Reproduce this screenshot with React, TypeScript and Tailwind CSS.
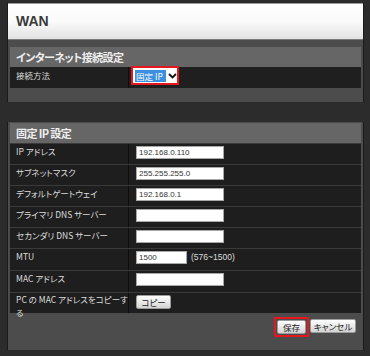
import React from "react";

const jp = "font-['Noto_Sans_CJK_JP',sans-serif] [font-feature-settings:'palt']";

interface Row {
  label: React.ReactNode;
  value?: string;
  kind: "input" | "mtu" | "copy";
  h: string;
  small?: boolean;
}

const rows: Row[] = [
  { label: "IP アドレス", value: "192.168.0.110", kind: "input", h: "h-[21px]" },
  { label: "サブネットマスク", value: "255.255.255.0", kind: "input", h: "h-[21px]" },
  { label: "デフォルトゲートウェイ", value: "192.168.0.1", kind: "input", h: "h-[21px]" },
  { label: "プライマリ DNS サーバー", value: "", kind: "input", h: "h-[21px]" },
  { label: "セカンダリ DNS サーバー", value: "", kind: "input", h: "h-[21px]" },
  { label: "MTU", value: "1500", kind: "mtu", h: "h-[22px]" },
  { label: "MAC アドレス", value: "", kind: "input", h: "h-[22px]" },
  {
    label: (
      <>
        PC の MAC アドレスをコピーす
        <br />る
      </>
    ),
    kind: "copy",
    h: "h-[21px]",
    small: true,
  },
];

function TextBox({ value, w }: { value: string; w: string }) {
  return (
    <input
      readOnly
      value={value}
      className={`${w} h-[13px] bg-white border border-[#a8a8a8] p-0 pl-[2px] text-[8px] leading-none text-[#333] font-['Liberation_Sans',sans-serif] outline-none`}
    />
  );
}

function GrayButton({ children, w }: { children: React.ReactNode; w: string }) {
  return (
    <button
      type="button"
      className={`${w} h-[14px] flex items-center justify-center bg-gradient-to-b from-white to-[#d4d4d4] border border-[#9c9c9c] rounded-[2px] text-[8.5px] leading-none text-[#222] ${jp}`}
    >
      {children}
    </button>
  );
}

function SectionHeader({ title }: { title: string }) {
  return (
    <div
      className={`h-[20px] bg-[#666666] flex items-center pl-[6px] text-[11px] font-bold text-[#eeeeee] tracking-[-0.6px] ${jp}`}
    >
      {title}
    </div>
  );
}

export default function App() {
  return (
    <div className="w-[370px] h-[356px] bg-[#2c2c2c] bg-[radial-gradient(#1c1c1c_0.5px,transparent_0.7px)] bg-[length:20px_20px] bg-[position:2px_18px] pt-[3px] pl-[7px] overflow-hidden">
      {/* panel 1 */}
      <div className="w-[357px] border-x border-[#1b1b1b]">
        <div className="h-[37px] bg-gradient-to-b from-white via-[#fafafa] to-[#e2e2e2] border-t border-[#9a9a9a] border-b border-b-[#7a7a7a] flex items-center pl-[8px]">
          <span className="text-[14px] font-bold text-[#3a3a3a] font-['Liberation_Sans',sans-serif]">WAN</span>
        </div>
        <div className="bg-[#4c4c4c] pt-[7px] pb-[14px] px-[2px]">
          <SectionHeader title="インターネット接続設定" />
          <div className="h-[21px] bg-[#1f1f1f] flex">
            <div className={`w-[119px] border-r border-[#0d0d0d] pl-[6px] pt-[3px] text-[8.5px] leading-[11px] text-[#dcdcdc] ${jp}`}>
              接続方法
            </div>
            <div className="flex-1 pl-[2px]">
              <div className="w-[48px] h-[19px] -mt-px border-2 border-[#e5171f] bg-white flex items-center pl-[2px]">
                <span className={`h-[12px] w-[31px] bg-[#3d8fdf] text-white text-[8.5px] leading-[12px] pl-[1px] ${jp}`}>
                  固定 IP
                </span>
                <svg width="9" height="6" viewBox="0 0 9 6" className="ml-[2px]">
                  <path d="M1 1 L4.5 4.5 L8 1" fill="none" stroke="#111" strokeWidth="1.8" />
                </svg>
              </div>
            </div>
          </div>
        </div>
      </div>

      <div className="h-[20px]" />

      {/* panel 2 */}
      <div className="w-[357px] border-x border-[#1b1b1b] bg-[#4c4c4c] px-[2px] pt-px">
        <SectionHeader title="固定 IP 設定" />
        {rows.map((r, i) => (
          <div key={i} className={`${r.h} bg-[#1e1e1e] border-t border-[#3a3a3a] flex`}>
            <div
              className={`w-[119px] shrink-0 border-r border-[#0d0d0d] pl-[6px] ${r.small ? "leading-[12.5px]" : "pt-[2px] leading-[11px]"} text-[8.5px] text-[#dcdcdc] ${jp}`}
            >
              {r.label}
            </div>
            <div className="flex-1 pl-[7px] pt-[2px] flex items-start">
              {r.kind === "input" && <TextBox value={r.value ?? ""} w="w-[88px]" />}
              {r.kind === "mtu" && (
                <>
                  <TextBox value={r.value ?? ""} w="w-[51px]" />
                  <span className="ml-[4px] text-[8.5px] leading-[12px] text-[#dcdcdc] font-['Liberation_Sans',sans-serif]">
                    (576~1500)
                  </span>
                </>
              )}
              {r.kind === "copy" && <GrayButton w="w-[35px]">コピー</GrayButton>}
            </div>
          </div>
        ))}
        <div className="h-[37px] flex items-start justify-end pt-[4px] pr-[5px]">
          <div className="border-2 border-[#e5171f] p-px">
            <GrayButton w="w-[29px]">保存</GrayButton>
          </div>
          <div className="ml-px mt-[2px]">
            <GrayButton w="w-[46px]">キャンセル</GrayButton>
          </div>
        </div>
      </div>
    </div>
  );
}
